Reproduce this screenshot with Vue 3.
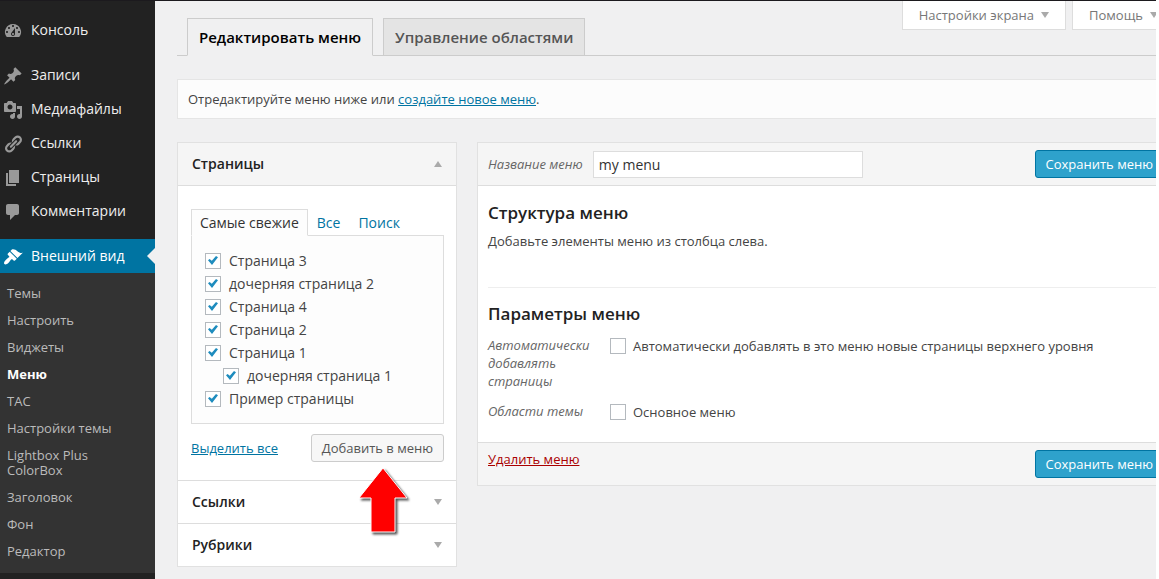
<script setup>
import { ref } from 'vue'

const mainItems = [
  { label: 'Консоль', gap: true, path: 'M3.76 16h12.48A7.998 7.998 0 0 0 10 3a7.998 7.998 0 0 0-6.24 13zM10 4c.55 0 1 .45 1 1s-.45 1-1 1-1-.45-1-1 .45-1 1-1zM6 6c.55 0 1 .45 1 1s-.45 1-1 1-1-.45-1-1 .45-1 1-1zm8 0c.55 0 1 .45 1 1s-.45 1-1 1-1-.45-1-1 .45-1 1-1zm-5.37 5.55L12 7v6c0 1.1-.9 2-2 2s-2-.9-2-2c0-.57.24-1.08.63-1.45zM4 10c.55 0 1 .45 1 1s-.45 1-1 1-1-.45-1-1 .45-1 1-1zm12 0c.55 0 1 .45 1 1s-.45 1-1 1-1-.45-1-1 .45-1 1-1zm-5 3c0-.55-.45-1-1-1s-1 .45-1 1 .45 1 1 1 1-.45 1-1z' },
  { label: 'Записи', path: 'M10.44 3.02l1.82-1.82 6.36 6.35-1.83 1.82c-1.05-.68-2.48-.57-3.41.36l-.75.75c-.92.93-1.04 2.35-.35 3.41l-1.83 1.82-2.41-2.41-2.8 2.79c-.42.42-3.38 2.71-3.8 2.29s1.86-3.39 2.28-3.81l2.79-2.79L4.1 9.36l1.83-1.82c1.05.69 2.48.57 3.4-.36l.75-.75c.93-.92 1.05-2.35.36-3.41z' },
  { label: 'Медиафайлы', path: 'M13 11V4c0-.55-.45-1-1-1h-1.67L9 1H5L3.67 3H2c-.55 0-1 .45-1 1v7c0 .55.45 1 1 1h10c.55 0 1-.45 1-1zM7 4.5c1.38 0 2.5 1.12 2.5 2.5S8.38 9.5 7 9.5 4.5 8.38 4.5 7 5.62 4.5 7 4.5zM14 6h5v10.5c0 1.38-1.12 2.5-2.5 2.5S14 17.88 14 16.5s1.12-2.5 2.5-2.5c.17 0 .34.02.5.05V9h-3V6zm-4 8.05V13h2v3.5c0 1.38-1.12 2.5-2.5 2.5S7 17.88 7 16.5 8.12 14 9.5 14c.17 0 .34.02.5.05z' },
  { label: 'Ссылки', path: 'M17.74 2.76c1.68 1.69 1.68 4.41 0 6.1l-1.53 1.52c-1.12 1.12-2.7 1.47-4.14 1.09l2.62-2.61.76-.77.76-.76c.84-.84.84-2.2 0-3.04-.84-.85-2.2-.85-3.04 0l-.77.76-3.38 3.38c-.37-1.44-.02-3.02 1.1-4.14l1.52-1.53c1.69-1.68 4.42-1.68 6.1 0zM8.59 13.43l5.34-5.34c.42-.42.42-1.1 0-1.52-.44-.43-1.13-.39-1.53 0l-5.33 5.34c-.42.42-.42 1.1 0 1.52.44.43 1.13.39 1.52 0zm-.76 2.29l4.14-4.15c.38 1.44.03 3.02-1.09 4.14l-1.52 1.53c-1.69 1.68-4.41 1.68-6.1 0-1.68-1.68-1.68-4.42 0-6.1l1.53-1.52c1.12-1.12 2.7-1.47 4.14-1.1l-4.14 4.15c-.85.84-.85 2.2 0 3.05.84.84 2.2.84 3.04 0z' },
  { label: 'Страницы', path: 'M6 15V2h10v13H6zm-1 1h8v2H3V5h2v11z' },
  { label: 'Комментарии', gap: true, path: 'M5 2h9c1.1 0 2 .9 2 2v7c0 1.1-.9 2-2 2h-2l-5 5v-5H5c-1.1 0-2-.9-2-2V4c0-1.1.9-2 2-2z' },
  { label: 'Внешний вид', current: true, path: 'M14.48 11.06L7.41 3.99l1.5-1.5c.5-.56 2.3-.47 3.51.32 1.21.8 1.43 1.28 2.91 2.1 1.18.64 2.45 1.26 4.45.85zm-.71.71L6.7 4.7 4.93 6.47c-.39.39-.39 1.02 0 1.41l1.06 1.06c.39.39.39 1.03 0 1.42-.6.6-1.43 1.11-2.21 1.69-.35.26-.7.53-1.01.84C1.43 14.23.4 16.08 1.4 17.07c.99 1 2.84-.03 4.18-1.36.31-.31.58-.66.85-1.02.57-.78 1.08-1.61 1.69-2.21.39-.39 1.02-.39 1.41 0l1.06 1.06c.39.39 1.02.39 1.41 0z' },
]

const subItems = ['Темы', 'Настроить', 'Виджеты', 'Меню', 'TAC', 'Настройки темы', 'Lightbox Plus ColorBox', 'Заголовок', 'Фон', 'Редактор']

const pages = ref([
  { label: 'Страница 3', checked: true },
  { label: 'дочерняя страница 2', checked: true },
  { label: 'Страница 4', checked: true },
  { label: 'Страница 2', checked: true },
  { label: 'Страница 1', checked: true },
  { label: 'дочерняя страница 1', checked: true, child: true },
  { label: 'Пример страницы', checked: true },
])

const menuName = ref('my menu')
const autoAdd = ref(false)
const primary = ref(false)
</script>

<template>
  <div class="admin">
    <nav class="sidebar">
      <ul class="main-nav">
        <li v-for="item in mainItems" :key="item.label" :class="{ gap: item.gap }">
          <a href="#" :class="{ current: item.current }">
            <svg viewBox="0 0 20 20" width="20" height="20" aria-hidden="true"><path :d="item.path" fill-rule="evenodd" /></svg>
            <span>{{ item.label }}</span>
          </a>
        </li>
      </ul>
      <ul class="sub-nav">
        <li v-for="item in subItems" :key="item">
          <a href="#" :class="{ active: item === 'Меню' }">{{ item }}</a>
        </li>
      </ul>
    </nav>

    <main class="main">
      <div class="content">
        <header class="top">
          <div class="nav-tabs">
            <a href="#" class="nav-tab nav-tab-active">Редактировать меню</a>
            <a href="#" class="nav-tab">Управление областями</a>
          </div>
          <div class="screen-meta">
            <button type="button">Настройки экрана <i class="arrow down"></i></button>
            <button type="button">Помощь <i class="arrow down"></i></button>
          </div>
        </header>

        <p class="notice">Отредактируйте меню ниже или <a href="#">создайте новое меню</a>.</p>

        <div class="columns">
          <div class="accordion">
            <section>
              <h3 class="open"><button type="button">Страницы <i class="arrow up"></i></button></h3>
              <div class="section-body">
                <div class="tabs">
                  <a href="#" class="tab tab-active">Самые свежие</a>
                  <a href="#" class="tab">Все</a>
                  <a href="#" class="tab">Поиск</a>
                </div>
                <ul class="page-list">
                  <li v-for="page in pages" :key="page.label" :class="{ child: page.child }">
                    <label><input v-model="page.checked" type="checkbox" />{{ page.label }}</label>
                  </li>
                </ul>
                <div class="actions">
                  <a href="#">Выделить все</a>
                  <div class="add">
                    <button type="button" class="button">Добавить в меню</button>
                    <svg class="pointer" viewBox="0 0 56 72" width="56" height="72" aria-hidden="true">
                      <path d="M26 3L50 33H38V67H14V33H2Z" />
                    </svg>
                  </div>
                </div>
              </div>
            </section>
            <section>
              <h3><button type="button">Ссылки <i class="arrow down"></i></button></h3>
            </section>
            <section>
              <h3><button type="button">Рубрики <i class="arrow down"></i></button></h3>
            </section>
          </div>

          <form class="editor" @submit.prevent>
            <div class="editor-head">
              <label for="menu-name">Название меню</label>
              <input id="menu-name" v-model="menuName" type="text" />
              <button type="submit" class="button-primary">Сохранить меню</button>
            </div>
            <div class="editor-body">
              <h2>Структура меню</h2>
              <p>Добавьте элементы меню из столбца слева.</p>
              <div class="settings">
                <h2>Параметры меню</h2>
                <div class="setting">
                  <span class="setting-name">Автоматически добавлять страницы</span>
                  <label><input v-model="autoAdd" type="checkbox" />Автоматически добавлять в это меню новые страницы верхнего уровня</label>
                </div>
                <div class="setting">
                  <span class="setting-name">Области темы</span>
                  <label><input v-model="primary" type="checkbox" />Основное меню</label>
                </div>
              </div>
            </div>
            <div class="editor-foot">
              <a href="#" class="delete">Удалить меню</a>
              <button type="submit" class="button-primary">Сохранить меню</button>
            </div>
          </form>
        </div>
      </div>
    </main>
  </div>
</template>

<style>
body {
  margin: 0;
  background: #fff;
}
</style>

<style scoped>
* {
  box-sizing: border-box;
}

.admin {
  display: flex;
  min-height: 100vh;
  margin-right: 3px;
  border-top: 1px solid #1c1a1e;
  background: #f0f0f1;
  color: #444;
  font: 13px/18px "Open Sans", "Noto Sans", sans-serif;
}

ul {
  list-style: none;
  margin: 0;
  padding: 0;
}

h2,
h3,
p {
  margin: 0;
}

a {
  color: #0074a2;
}

button,
input {
  font: inherit;
  color: inherit;
  margin: 0;
}

/* Sidebar */
.sidebar {
  flex: 0 0 155px;
  padding-top: 12px;
  background: #222;
}

.main-nav a {
  position: relative;
  display: flex;
  align-items: center;
  gap: 8px;
  height: 34px;
  padding-left: 3px;
  color: #eee;
  font-size: 14px;
  text-decoration: none;
}

.main-nav svg {
  margin-top: 2px;
  fill: #999;
}

.main-nav .gap {
  margin-bottom: 11px;
}

.main-nav .current {
  background: #0074a2;
  color: #fff;
}

.main-nav .current svg {
  fill: #fff;
}

.main-nav .current::after {
  content: "";
  position: absolute;
  top: 9px;
  right: 0;
  border: 8px solid transparent;
  border-left-width: 0;
  border-right-color: #f0f0f1;
}

.sub-nav {
  padding: 7px 0 8px;
  background: #333;
}

.sub-nav a {
  display: block;
  padding: 6px 40px 6px 7px;
  color: #bbb;
  line-height: 15px;
  text-decoration: none;
}

.sub-nav .active {
  color: #fff;
  font-weight: 700;
}

/* Main area */
.main {
  flex: 1;
  min-width: 0;
  overflow: hidden;
}

.content {
  margin: 0 -19px 0 22px;
}

.top {
  display: flex;
  justify-content: space-between;
  align-items: flex-start;
  height: 55px;
  border-bottom: 1px solid #ccc;
}

.nav-tabs {
  display: flex;
  align-self: flex-end;
  gap: 10px;
  padding-left: 10px;
  margin-bottom: -1px;
}

.nav-tab {
  height: 38px;
  padding: 6px 11px;
  border: 1px solid #ccc;
  background: #e4e4e4;
  color: #555;
  font-size: 15px;
  font-weight: 600;
  line-height: 24px;
  text-decoration: none;
}

.nav-tab-active {
  border-bottom-color: #f0f0f1;
  background: #f0f0f1;
  color: #000;
}

.screen-meta {
  display: flex;
  gap: 6px;
}

.screen-meta button {
  display: flex;
  align-items: center;
  gap: 7px;
  height: 29px;
  padding: 0 16px;
  border: 1px solid #ddd;
  border-top: 0;
  background: #fff;
  color: #777;
}

.arrow {
  width: 8px;
  height: 6px;
  background: #aaa;
}

.down {
  clip-path: polygon(0 0, 100% 0, 50% 100%);
}

.up {
  clip-path: polygon(0 100%, 100% 100%, 50% 0);
}

.notice {
  margin-top: 23px;
  padding: 10px;
  border: 1px solid #e5e5e5;
  background: #fcfcfc;
}

.columns {
  display: flex;
  align-items: flex-start;
  gap: 20px;
  margin-top: 23px;
}

/* Accordion */
.accordion {
  flex: 0 0 280px;
  border: 1px solid #e1e1e1;
  background: #fff;
}

.accordion section + section {
  border-top: 1px solid #ddd;
}

.accordion h3 button {
  display: flex;
  justify-content: space-between;
  align-items: center;
  width: 100%;
  height: 42px;
  padding: 0 14px;
  border: 0;
  background: none;
  color: #222;
  font-size: 14px;
  font-weight: 600;
}

.accordion .open {
  border-bottom: 1px solid #ddd;
  background: #f5f5f5;
}

.section-body {
  padding: 23px 12px 18px 13px;
}

.tabs {
  display: flex;
  font-size: 14px;
}

.tab {
  height: 27px;
  padding: 4px 8px;
  border: 1px solid transparent;
  text-decoration: none;
}

.tab-active {
  position: relative;
  border-color: #ddd;
  border-bottom-color: #fdfdfd;
  background: #fdfdfd;
  color: #333;
}

.page-list {
  margin-top: -1px;
  padding: 13px;
  border: 1px solid #ddd;
  background: #fdfdfd;
  font-size: 14px;
}

.page-list label {
  display: flex;
  align-items: center;
  gap: 8px;
  height: 23px;
}

.page-list .child {
  padding-left: 18px;
}

input[type="checkbox"] {
  appearance: none;
  display: grid;
  place-items: center;
  flex: none;
  width: 16px;
  height: 16px;
  border: 1px solid #b4b9be;
  background: #fff;
}

input[type="checkbox"]:checked::before {
  content: "";
  width: 10px;
  height: 9px;
  background: #1e8cbe;
  clip-path: polygon(0 47%, 16% 32%, 38% 54%, 80% 0, 100% 14%, 40% 100%);
}

.actions {
  display: flex;
  justify-content: space-between;
  align-items: center;
  margin-top: 10px;
}

.add {
  position: relative;
}

.button {
  height: 28px;
  padding: 0 10px;
  border: 1px solid #ccc;
  border-radius: 3px;
  background: #f7f7f7;
  color: #555;
}

.pointer {
  position: absolute;
  top: 31px;
  left: 46px;
  fill: #f00;
  stroke: #fff;
  stroke-width: 1;
  filter: drop-shadow(2px 2px 1px #555);
}

/* Menu editor */
.editor {
  flex: 1;
  min-width: 0;
  border: 1px solid #e1e1e1;
  background: #fff;
}

.editor-head,
.editor-foot {
  display: flex;
  height: 42px;
  padding: 7px 10px;
  background: #f5f5f5;
}

.editor-head {
  align-items: center;
}

.editor-foot {
  align-items: flex-start;
}

.editor-head label,
.setting-name {
  color: #666;
  font-style: italic;
}

.editor-head input {
  width: 270px;
  height: 27px;
  margin-left: 10px;
  padding: 0 5px;
  border: 1px solid #ddd;
  background: #fff;
  color: #333;
  font-size: 14px;
}

.button-primary {
  height: 28px;
  margin-left: auto;
  padding: 0 10px;
  border: 1px solid #0074a2;
  border-radius: 3px;
  background: #2ea2cc;
  color: #fff;
}

.editor-body {
  padding: 15px 0 21px 10px;
  border: 1px solid #ddd;
  border-width: 1px 0;
}

.editor-body h2 {
  color: #222;
  font-size: 17px;
  font-weight: 600;
  line-height: 24px;
}

.editor-body p {
  margin-top: 7px;
}

.settings {
  margin-top: 37px;
  padding-top: 14px;
  border-top: 1px solid #eee;
}

.setting {
  display: flex;
  align-items: flex-start;
  margin-top: 12px;
}

.settings h2 + .setting {
  margin-top: 10px;
}

.setting-name {
  flex: none;
  width: 104px;
  margin-right: 18px;
}

.setting label {
  display: flex;
  align-items: center;
  gap: 7px;
  padding-top: 1px;
}

.delete {
  color: #a00;
}
</style>
